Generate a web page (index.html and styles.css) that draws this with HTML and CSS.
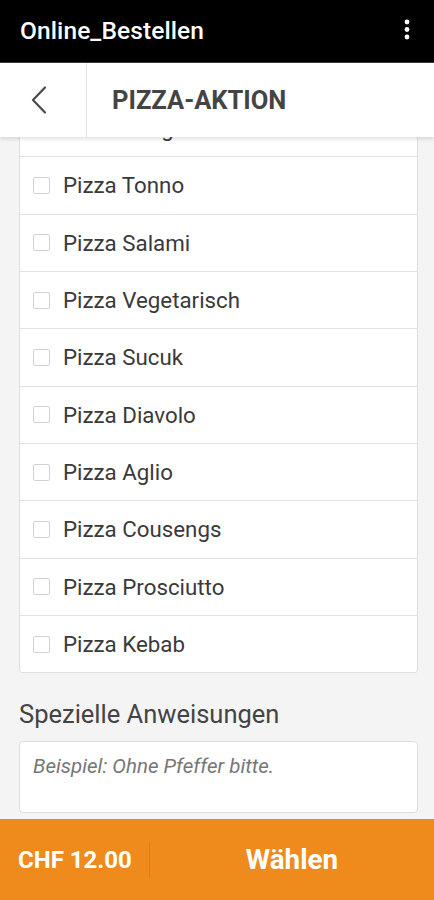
FILE: index.html
```html
<!DOCTYPE html>
<html lang="de">
<head>
<meta charset="utf-8">
<title>Online_Bestellen</title>
<link rel="stylesheet" href="styles.css">
</head>
<body>
<div class="app">
  <div class="topbar">
    <span class="app-title">Online_Bestellen</span>
    <svg class="menu" width="10" height="26" viewBox="0 0 10 26" aria-hidden="true">
      <circle cx="5" cy="5" r="2.4" fill="#fff"/>
      <circle cx="5" cy="12.5" r="2.4" fill="#fff"/>
      <circle cx="5" cy="20" r="2.4" fill="#fff"/>
    </svg>
  </div>
  <div class="header">
    <div class="back">
      <svg width="20" height="30" viewBox="0 0 20 30" aria-hidden="true">
        <polyline points="15,2.5 3,15 15,27.5" fill="none" stroke="#4a4a4a" stroke-width="2.2" stroke-linecap="round" stroke-linejoin="round"/>
      </svg>
    </div>
    <div class="page-title">PIZZA-AKTION</div>
  </div>
  <div class="scroll">
    <div class="content">
      <div class="list">
        <label class="row"><span class="box"></span><span class="name">Pizza Margherita</span></label>
        <label class="row"><span class="box"></span><span class="name">Pizza Tonno</span></label>
        <label class="row"><span class="box"></span><span class="name">Pizza Salami</span></label>
        <label class="row"><span class="box"></span><span class="name">Pizza Vegetarisch</span></label>
        <label class="row"><span class="box"></span><span class="name">Pizza Sucuk</span></label>
        <label class="row"><span class="box"></span><span class="name">Pizza Diavolo</span></label>
        <label class="row"><span class="box"></span><span class="name">Pizza Aglio</span></label>
        <label class="row"><span class="box"></span><span class="name">Pizza Cousengs</span></label>
        <label class="row"><span class="box"></span><span class="name">Pizza Prosciutto</span></label>
        <label class="row"><span class="box"></span><span class="name">Pizza Kebab</span></label>
      </div>
      <div class="section-title">Spezielle Anweisungen</div>
      <textarea class="notes" placeholder="Beispiel: Ohne Pfeffer bitte."></textarea>
    </div>
  </div>
  <div class="footer">
    <div class="price">CHF 12.00</div>
    <div class="choose">Wählen</div>
  </div>
</div>
</body>
</html>
```
FILE: styles.css
```css
* { box-sizing: border-box; }
html, body { margin: 0; padding: 0; }
body {
  font-family: Roboto, "Liberation Sans", Arial, sans-serif;
  background: #f4f4f4;
}
.app {
  width: 434px;
  height: 900px;
  display: flex;
  flex-direction: column;
  overflow: hidden;
}
.topbar {
  height: 63px;
  flex: none;
  background: #000;
  border-bottom: 1px solid #3a3a3a;
  display: flex;
  align-items: center;
  justify-content: space-between;
  padding: 0 22px 2px 20px;
}
.app-title {
  color: #fff;
  font-size: 24.5px;
  font-weight: 500;
  letter-spacing: 0.1px;
}
.menu { display: block; }
.header {
  height: 74px;
  flex: none;
  background: #fff;
  display: flex;
  align-items: stretch;
  position: relative;
  z-index: 2;
  box-shadow: 0 2px 4px rgba(0,0,0,0.12);
}
.back {
  width: 87px;
  border-right: 1px solid #e2e2e2;
  display: flex;
  align-items: center;
  justify-content: center;
  padding-right: 7px;
}
.back svg { display: block; }
.page-title {
  display: flex;
  align-items: center;
  padding-left: 25px;
  font-size: 25.5px;
  font-weight: 700;
  color: #444;
}
.scroll {
  flex: 1;
  overflow: hidden;
  background: #f4f4f4;
}
.content {
  margin-top: -38px;
  padding: 0 16px 0 19px;
}
.list {
  background: #fff;
  border: 1px solid #dedede;
  border-radius: 3px;
}
.row {
  display: flex;
  align-items: center;
  height: 57.33px;
  padding-left: 13px;
  border-bottom: 1px solid #e2e2e2;
}
.row:last-child { border-bottom: none; height: 56.33px; }
.box {
  width: 17px;
  height: 17px;
  border: 1px solid #d2d2d2;
  border-radius: 2px;
  background: #fff;
  flex: none;
}
.name {
  margin-left: 13px;
  font-size: 22.3px;
  color: #3a3a3a;
}
.section-title {
  margin-top: 26px;
  line-height: 30px;
  font-size: 25.5px;
  color: #444;
}
.notes {
  display: block;
  width: 100%;
  height: 72px;
  margin-top: 12px;
  border: 1px solid #dedede;
  border-radius: 4px;
  background: #fff;
  resize: none;
  padding: 12px 13px;
  font-family: Roboto, "Liberation Sans", Arial, sans-serif;
  font-size: 20.5px;
  font-style: italic;
  color: #333;
  outline: none;
}
.notes::placeholder { color: #777; font-style: italic; }
.footer {
  height: 81px;
  flex: none;
  background: #ef8b1c;
  display: flex;
  align-items: center;
  color: #fff;
  font-weight: 700;
}
.price {
  width: 150px;
  padding-left: 18px;
  font-size: 24px;
  border-right: 1px solid #dc7c14;
  line-height: 36px;
}
.choose {
  flex: 1;
  text-align: center;
  font-size: 27.8px;
}
```
